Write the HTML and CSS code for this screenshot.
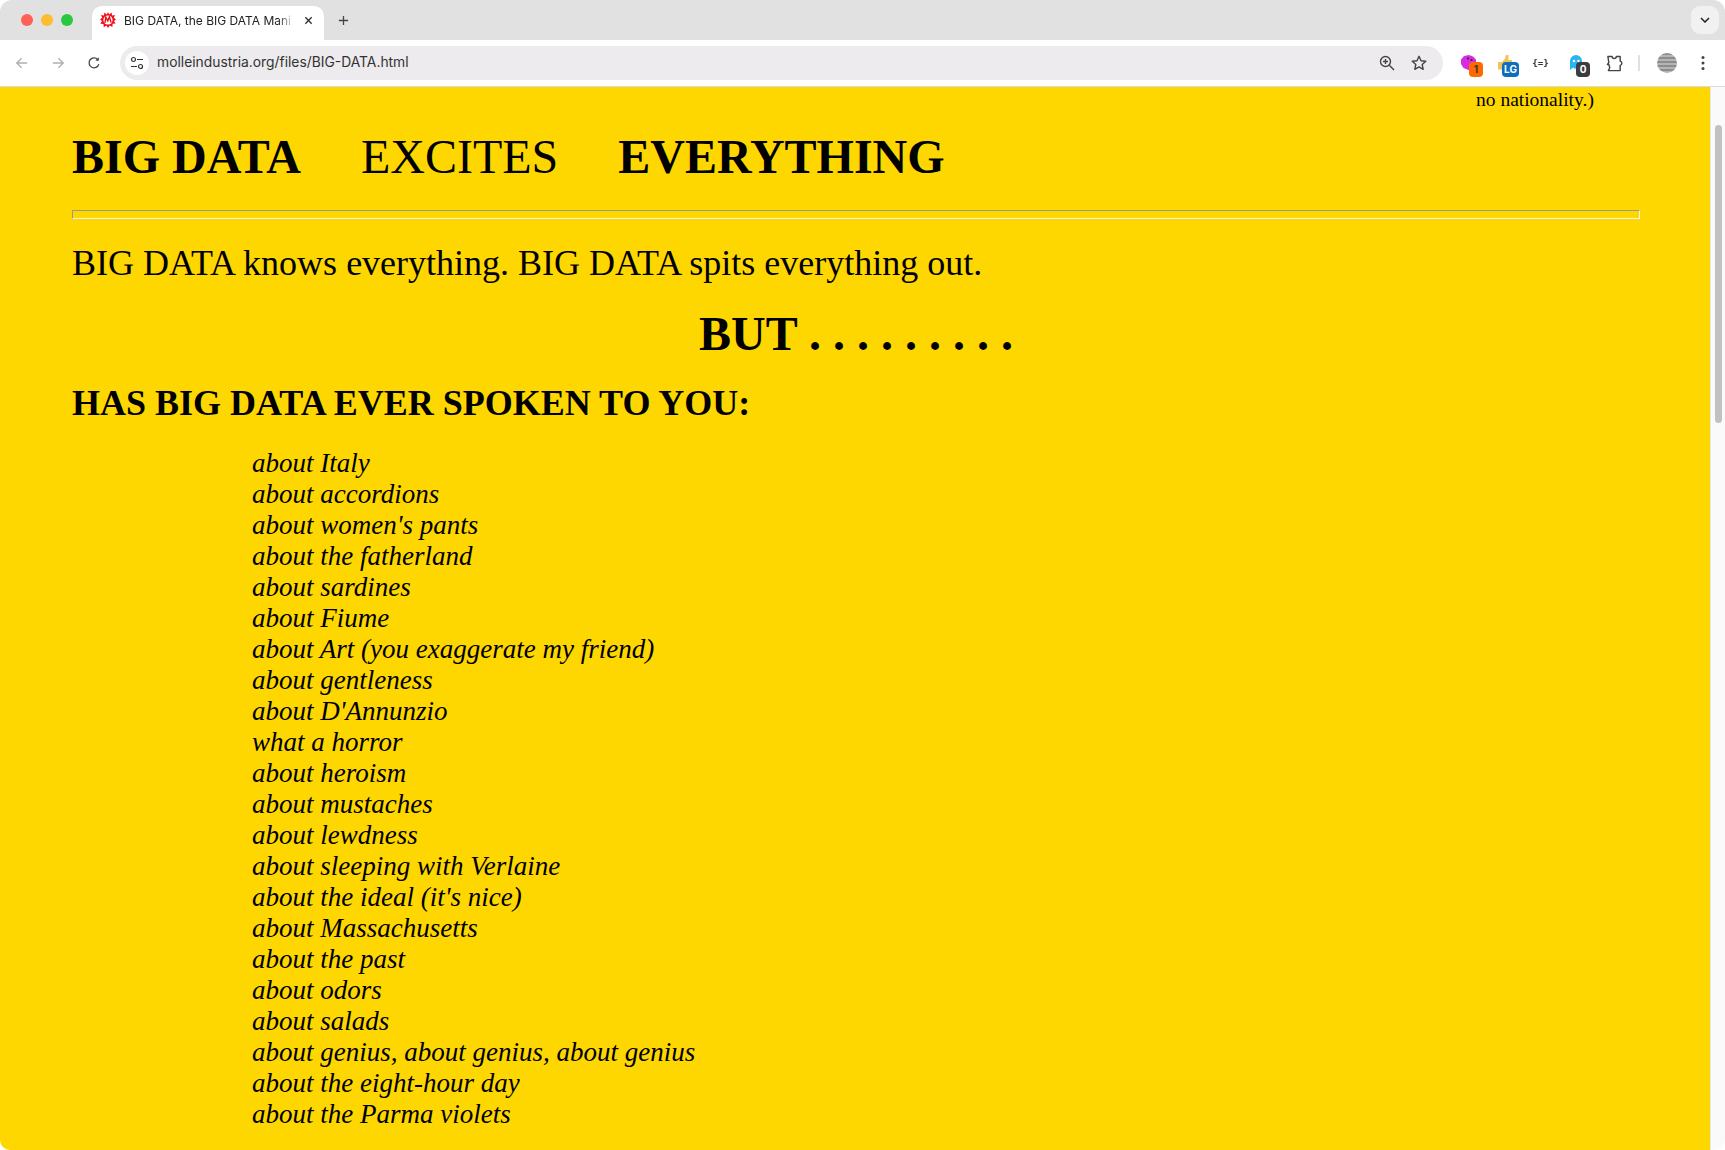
FILE: index.html
```html
<!DOCTYPE html>
<html lang="en">
<head>
  <meta charset="UTF-8">
  <title>BIG DATA, the BIG DATA Manifesto</title>
  <link rel="stylesheet" href="styles.css">
</head>
<body>

  <div class="window">
    <div class="tabstrip">
      <div class="lights">
        <span class="light red"></span>
        <span class="light amber"></span>
        <span class="light green"></span>
      </div>
      <div class="tab">
        <svg class="favicon" viewBox="0 0 16 16">
          <polygon fill="#f0101c" points="8,0 9.200,2.600 11.600,.6 12,3.600 15,3 13.800,5.800 16,7.400 14,9 15.600,11.600 12.600,11.800 12.400,15 9.800,13.400 8,16 6.400,13.400 3.800,15.200 3.400,12 .4,11.800 2,9 0,7.400 2.200,5.800 1,3 4,3.600 4.400,.6 6.800,2.600"/>
          <circle cx="8" cy="8" r="4.600" fill="#fff"/>
          <path d="M5 11 5.800 5l2 4 1.600-4.500L11 10.500" fill="none" stroke="#f0101c" stroke-width="1.400"/>
        </svg>
        <span class="tab-title">BIG DATA, the BIG DATA Mani</span>
        <svg class="tab-close" viewBox="0 0 10 10"><path d="M1.500 1.500l7 7M8.500 1.500l-7 7" stroke="#333" stroke-width="1.500"/></svg>
      </div>
      <svg class="new-tab" viewBox="0 0 12 12"><path d="M6 1v10M1 6h10" stroke="#444" stroke-width="1.400"/></svg>
      <div class="tab-search">
        <svg viewBox="0 0 10 6" width="10" height="6"><path d="M1 1l4 4 4-4" fill="none" stroke="#222" stroke-width="1.500"/></svg>
      </div>
    </div>

    <div class="toolbar">
      <div class="nav">
        <svg class="nav-icon" viewBox="0 0 16 16"><path d="M14 8H2.500M7.500 2.500 2 8l5.500 5.500" fill="none" stroke="#b0b0b0" stroke-width="1.500"/></svg>
        <svg class="nav-icon" viewBox="0 0 16 16"><path d="M2 8h11.500M8.500 2.500 14 8l-5.500 5.500" fill="none" stroke="#b0b0b0" stroke-width="1.500"/></svg>
        <svg class="nav-icon" viewBox="0 0 16 16"><path d="M13.500 9.500A5.700 5.700 0 1 1 12.300 4" fill="none" stroke="#444" stroke-width="1.500"/><path d="M13.500 1.500v4h-4z" fill="#444"/></svg>
      </div>

      <div class="omnibox">
        <div class="site-chip">
          <svg viewBox="0 0 14 14" width="14" height="14">
            <circle cx="3.500" cy="3.500" r="2" fill="none" stroke="#333" stroke-width="1.200"/>
            <path d="M7 3.500h6M1 10.500h6" stroke="#333" stroke-width="1.200"/>
            <circle cx="10.500" cy="10.500" r="2" fill="none" stroke="#333" stroke-width="1.200"/>
          </svg>
        </div>
        <span class="url">molleindustria.org/files/BIG-DATA.html</span>
        <svg class="omni-icon zoom-icon" viewBox="0 0 16 16">
          <circle cx="6.500" cy="6.500" r="5" fill="none" stroke="#444" stroke-width="1.400"/>
          <path d="M10.300 10.300 15 15M4 6.500h5M6.500 4v5" stroke="#444" stroke-width="1.400"/>
        </svg>
        <svg class="omni-icon" viewBox="0 0 16 16"><path d="M8 1.300l2 4.500 4.800.5-3.600 3.200 1 4.800L8 11.900l-4.200 2.400 1-4.800L1.200 6.300 6 5.800z" fill="none" stroke="#444" stroke-width="1.400" stroke-linejoin="round"/></svg>
      </div>

      <div class="extensions">
        <div class="ext">
          <svg viewBox="0 0 16 16" width="16" height="16"><path d="M0 4.500 3 1l5-1 4 1.500 3 3v4l-3 2-.5 3-4 1.500L2.500 13 0 9z" fill="#d62be0"/><circle cx="7" cy="3.500" r="1" fill="#222"/><circle cx="10.500" cy="5" r="1" fill="#222"/></svg>
          <span class="badge orange">1</span>
        </div>
        <div class="ext">
          <svg viewBox="0 0 16 16" width="16" height="16"><path d="M1 7h3.500v7.500H1zM4.500 7l3-2.500L9 0h2.500v5H15v10H4.500z" fill="#f2c458"/></svg>
          <span class="badge blue">LG</span>
        </div>
        <div class="ext json-ext">{=}</div>
        <div class="ext">
          <svg viewBox="0 0 16 16" width="16" height="16"><path d="M2 15V6a6 6 0 0 1 12 0v6l-2.500 2-2-2-2.500 2-2-1.500z" fill="#29b5f0"/><circle cx="6" cy="6" r="1.200" fill="#fff"/><circle cx="10.500" cy="6" r="1.200" fill="#fff"/></svg>
          <span class="badge dark">0</span>
        </div>
        <svg class="puzzle" viewBox="0 0 18 18"><path d="M2 1.500h4.500a2.200 2.200 0 0 0 4.400 0H15v5a2.300 2.300 0 0 1 0 4.500v5.500H2.500l1.500-3-1-3.500H1.500L3 8z" fill="none" stroke="#444" stroke-width="1.500" stroke-linejoin="round"/></svg>
        <span class="separator"></span>
        <span class="avatar"></span>
        <svg class="menu" viewBox="0 0 4 16"><circle cx="2" cy="2.500" r="1.500" fill="#444"/><circle cx="2" cy="8" r="1.500" fill="#444"/><circle cx="2" cy="13.500" r="1.500" fill="#444"/></svg>
      </div>
    </div>

    <div class="viewport">
      <div class="page">
        <p class="carry-over">no nationality.)</p>
        <h1 class="headline"><strong>BIG DATA</strong>&nbsp;&nbsp;&nbsp;&nbsp; EXCITES &nbsp;&nbsp;&nbsp;&nbsp;<strong>EVERYTHING</strong></h1>
        <hr class="rule">
        <p class="lead">BIG DATA knows everything. BIG DATA spits everything out.</p>
        <h1 class="but">BUT . . . . . . . . .</h1>
        <h2 class="question">HAS BIG DATA EVER SPOKEN TO YOU:</h2>
        <ul class="topics">
          <li>about Italy</li>
          <li>about accordions</li>
          <li>about women's pants</li>
          <li>about the fatherland</li>
          <li>about sardines</li>
          <li>about Fiume</li>
          <li>about Art (you exaggerate my friend)</li>
          <li>about gentleness</li>
          <li>about D'Annunzio</li>
          <li>what a horror</li>
          <li>about heroism</li>
          <li>about mustaches</li>
          <li>about lewdness</li>
          <li>about sleeping with Verlaine</li>
          <li>about the ideal (it's nice)</li>
          <li>about Massachusetts</li>
          <li>about the past</li>
          <li>about odors</li>
          <li>about salads</li>
          <li>about genius, about genius, about genius</li>
          <li>about the eight-hour day</li>
          <li>about the Parma violets</li>
        </ul>
      </div>
      <div class="scrollbar"><div class="scrollbar-thumb"></div></div>
    </div>
  </div>

</body>
</html>
```

FILE: styles.css
```css
html, body {
  margin: 0;
  height: 100%;
  background: #fff;
  overflow: hidden;
}

.window {
  display: flex;
  flex-direction: column;
  height: 1150px;
  border-radius: 12px 12px 10px 10px;
  overflow: hidden;
  font-family: Inter, "Liberation Sans", sans-serif;
}

/* tab strip */
.tabstrip {
  display: flex;
  align-items: flex-end;
  height: 40px;
  flex: none;
  background: #e1e1e1;
}

.lights {
  display: flex;
  align-items: center;
  gap: 8px;
  height: 40px;
  padding: 0 0 0 21px;
  width: 71px;
}

.light {
  width: 12px;
  height: 12px;
  border-radius: 50%;
}

.red { background: #ff5f57; }
.amber { background: #febc2e; }
.green { background: #28c840; }

.tab {
  display: flex;
  align-items: center;
  width: 232px;
  height: 34px;
  padding: 0 11px 6px 8px;
  box-sizing: border-box;
  background: #fff;
  border-radius: 10px 10px 0 0;
}

.favicon {
  width: 16px;
  height: 16px;
  flex: none;
}

.tab-title {
  flex: 1;
  min-width: 0;
  margin-left: 8px;
  font-size: 12px;
  color: #222;
  white-space: nowrap;
  -webkit-mask-image: linear-gradient(to right, #000 90%, transparent 100%);
  mask-image: linear-gradient(to right, #000 90%, transparent 100%);
}

.tab-close {
  width: 9px;
  height: 9px;
  margin-left: 9px;
  flex: none;
}

.new-tab {
  width: 11px;
  height: 11px;
  margin: 0 0 14px 14px;
  flex: none;
}

.tab-search {
  display: flex;
  align-items: center;
  justify-content: center;
  width: 28px;
  height: 28px;
  margin: 0 6px 6px auto;
  background: #f1f1f1;
  border-radius: 9px;
}

/* toolbar */
.toolbar {
  display: flex;
  align-items: center;
  height: 46px;
  flex: none;
  background: #fff;
  border-bottom: 1px solid #dcdcdc;
}

.nav {
  display: flex;
  align-items: center;
  gap: 22px;
  width: 120px;
  padding-left: 15px;
  box-sizing: border-box;
}

.nav-icon {
  width: 14px;
  height: 14px;
  flex: none;
}

.omnibox {
  display: flex;
  align-items: center;
  width: 1323px;
  height: 34px;
  flex: none;
  background: #edebed;
  border-radius: 17px;
}

.site-chip {
  display: flex;
  align-items: center;
  justify-content: center;
  width: 24px;
  height: 24px;
  margin-left: 5px;
  background: #fff;
  border-radius: 50%;
}

.url {
  margin: 0 0 2px 8px;
  font-size: 13.850px;
  color: #333;
}

.omni-icon {
  width: 16px;
  height: 16px;
  margin-right: 16px;
  flex: none;
}

.zoom-icon {
  margin-left: auto;
}

.extensions {
  display: flex;
  align-items: center;
  flex: 1;
}

.ext {
  position: relative;
  width: 36px;
  height: 26px;
  display: flex;
  align-items: center;
  justify-content: center;
  flex: none;
}

.ext:first-child {
  margin-left: 8px;
}

.badge {
  position: absolute;
  right: 4px;
  bottom: -1px;
  min-width: 10px;
  padding: 1px 2px;
  font-size: 10px;
  font-weight: 700;
  line-height: 13px;
  text-align: center;
  color: #fff;
  border-radius: 4px;
}

.orange { background: #ff6a00; color: #333; }
.blue { background: #0d6ebd; }
.dark { background: #3c3c40; }

.json-ext {
  width: 35px;
  font-family: "DejaVu Sans Mono", monospace;
  font-size: 9px;
  font-weight: 700;
  color: #333;
}

.puzzle {
  width: 17px;
  height: 17px;
  margin-left: 12px;
  flex: none;
}

.separator {
  width: 2px;
  height: 16px;
  margin-left: 15px;
  background: #e0e0e0;
}

.avatar {
  width: 20px;
  height: 20px;
  margin-left: 17px;
  border-radius: 50%;
  background: repeating-linear-gradient(to bottom, #8d8d8d 0, #8d8d8d 2px, #b5b5b5 2px, #b5b5b5 4px);
}

.menu {
  width: 4px;
  height: 16px;
  margin-left: 24px;
  flex: none;
}

/* page */
.viewport {
  display: flex;
  flex: 1;
  min-height: 0;
}

.page {
  flex: 1;
  min-width: 0;
  overflow: hidden;
  padding: 1px 70px 0 72px;
  background: #ffd700;
  color: #000;
  font-family: "Liberation Serif", "Times New Roman", serif;
}

.carry-over {
  margin: 0;
  padding-left: 1404px;
  font-size: 19.500px;
  line-height: 23px;
}

.headline {
  margin: 18px 0 0;
  font-size: 48px;
  font-weight: normal;
  line-height: 55px;
  white-space: nowrap;
}

.rule {
  height: 7px;
  margin: 26px 0 0;
  border: 1px solid;
  border-color: #9a9a9a #f4f4f4 #f4f4f4 #9a9a9a;
}

.lead {
  margin: 24px 0 0;
  font-size: 36px;
  line-height: 41px;
}

.but {
  margin: 22px 0 0;
  font-size: 48px;
  line-height: 55px;
  text-align: center;
}

.question {
  margin: 22px 0 0;
  font-size: 36px;
  line-height: 41px;
}

.topics {
  margin: 24px 0 0;
  padding: 0 0 0 180px;
  list-style: none;
  font-size: 27px;
  font-style: italic;
  line-height: 31px;
}

.scrollbar {
  width: 15px;
  flex: none;
  box-sizing: border-box;
  padding: 38px 3px 0 4px;
  background: #fafafa;
  border-left: 1px solid #e8e8e8;
}

.scrollbar-thumb {
  height: 298px;
  background: #c1c1c1;
  border-radius: 4px;
}
```
